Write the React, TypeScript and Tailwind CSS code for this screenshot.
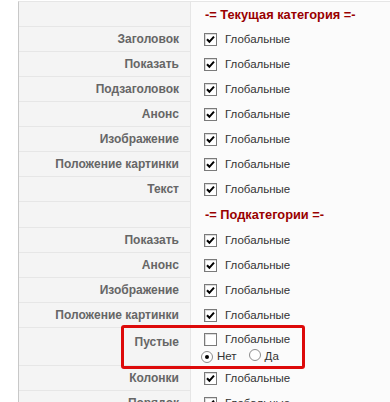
import React from "react";

type Row =
  | { kind: "header"; title: string; h: string }
  | { kind: "check"; label: string; checked?: boolean }
  | { kind: "empty"; label: string };

const rows: Row[] = [
  { kind: "header", title: "-= Текущая категория =-", h: "h-[25px]" },
  { kind: "check", label: "Заголовок" },
  { kind: "check", label: "Показать" },
  { kind: "check", label: "Подзаголовок" },
  { kind: "check", label: "Анонс" },
  { kind: "check", label: "Изображение" },
  { kind: "check", label: "Положение картинки" },
  { kind: "check", label: "Текст" },
  { kind: "header", title: "-= Подкатегории =-", h: "h-[26px]" },
  { kind: "check", label: "Показать" },
  { kind: "check", label: "Анонс" },
  { kind: "check", label: "Изображение" },
  { kind: "check", label: "Положение картинки" },
  { kind: "empty", label: "Пустые" },
  { kind: "check", label: "Колонки" },
  { kind: "check", label: "Порядок" },
];

const Checkbox = ({ checked }: { checked?: boolean }) => (
  <span className="inline-flex h-[13px] w-[13px] shrink-0 items-center justify-center border border-[#7a7a7a] bg-white shadow-[inset_1px_1px_0_#dcdcdc]">
    {checked && (
      <svg width="9" height="9" viewBox="0 0 9 9">
        <path d="M1 4.2 L3.4 6.8 L8 1.6" fill="none" stroke="#000" strokeWidth="2" />
      </svg>
    )}
  </span>
);

const Radio = ({ checked }: { checked?: boolean }) => (
  <span className="inline-flex h-[12px] w-[12px] shrink-0 items-center justify-center rounded-full border border-[#8c8c8c] bg-white">
    {checked && <span className="h-[4px] w-[4px] rounded-full bg-black" />}
  </span>
);

const Global = ({ checked }: { checked?: boolean }) => (
  <div className="flex h-[13px] items-center gap-[8px]">
    <Checkbox checked={checked} />
    <span className="text-[11.5px] leading-[13px] text-[#333]">Глобальные</span>
  </div>
);

const App = () => {
  return (
    <div
      className="relative h-[402px] w-[390px] overflow-hidden bg-white"
      style={{ fontFamily: '"Liberation Sans", Arial, sans-serif' }}
    >
      <div className="ml-[18px] mt-[1px] border-l border-t border-l-[#c8c8c8] border-t-[#e6e6e6]">
        {rows.map((r, i) => {
          if (r.kind === "header") {
            return (
              <div key={i} className={`flex ${r.h}`}>
                <div className="w-[172px] shrink-0 border-b border-r border-[#e6e6e6] bg-[#f4f4f4]" />
                <div className="flex flex-1 items-center bg-[#fbfbfb] pl-[14px]">
                  <span className="text-[12.8px] font-bold text-[#990000]">{r.title}</span>
                </div>
              </div>
            );
          }
          if (r.kind === "empty") {
            return (
              <div key={i} className="flex h-[38px]">
                <div className="w-[172px] shrink-0 border-b border-r border-[#e6e6e6] bg-[#f4f4f4] pr-[11px] pt-[5px] text-right text-[12px] font-bold text-[#666]">
                  {r.label}
                </div>
                <div className="flex flex-1 flex-col bg-[#fbfbfb] pl-[13px] pt-[5px]">
                  <Global />
                  <div className="mt-[4px] -ml-[3px] flex h-[13px] items-center text-[11.5px] leading-[13px] text-[#333]">
                    <Radio checked />
                    <span className="ml-[4px]">Нет</span>
                    <span className="ml-[12px]">
                      <Radio />
                    </span>
                    <span className="ml-[4px]">Да</span>
                  </div>
                </div>
              </div>
            );
          }
          return (
            <div key={i} className="flex h-[25px]">
              <div className="flex w-[172px] shrink-0 items-center justify-end border-b border-r border-[#e6e6e6] bg-[#f4f4f4] pr-[11px] text-[12px] font-bold text-[#666]">
                {r.label}
              </div>
              <div className="flex flex-1 items-center bg-[#fbfbfb] pl-[13px]">
                <Global checked />
              </div>
            </div>
          );
        })}
      </div>
      <div className="absolute left-[121px] top-[325px] h-[44px] w-[184px] rounded-[3px] border-[3px] border-[#dd0a0a]" />
    </div>
  );
};

export default App;
